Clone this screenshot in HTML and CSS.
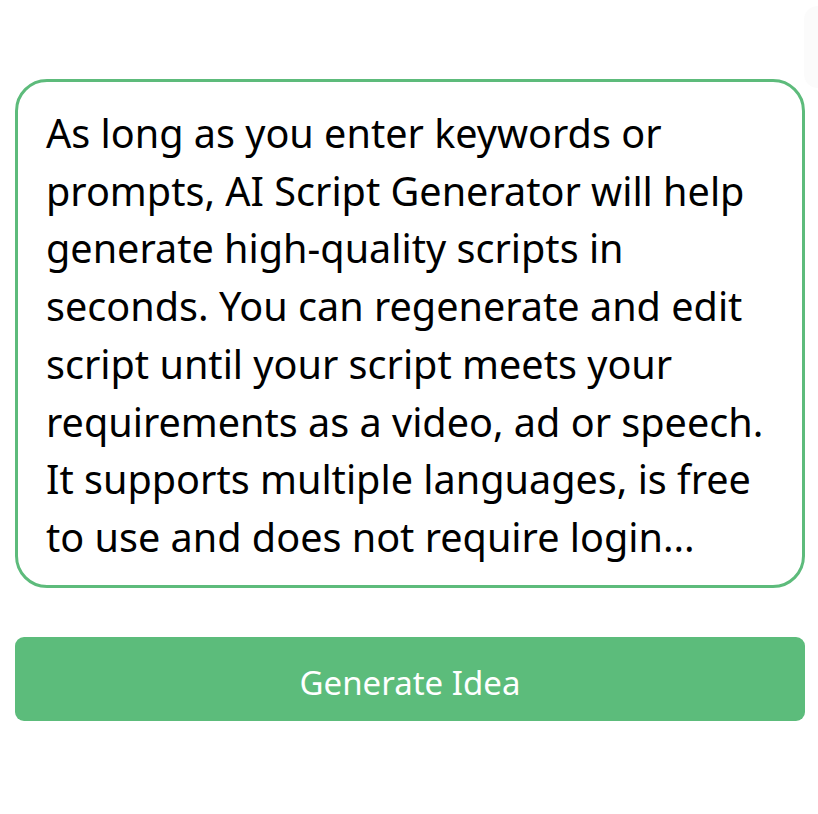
FILE: index.html
```html
<!DOCTYPE html>
<html lang="en">

<head>
    <meta charset="UTF-8">
    <meta name="viewport" content="width=device-width, initial-scale=1.0">
    <title>AI Script Generator</title>
    <link rel="stylesheet" href="styles.css">
</head>

<body>
    <div class="glow"></div>
    <form class="generator">
        <div class="prompt__box">
            As long as you enter keywords or prompts, AI Script Generator will help generate high-quality scripts in seconds. You can regenerate and edit script until your script meets your requirements as a video, ad or speech. It supports multiple languages, is free to use and does not require login...
        </div>
        <button class="btn" type="button">Generate Idea</button>
    </form>
</body>

</html>
```

FILE: styles.css
```css
* {
    box-sizing: border-box;
    padding: 0px;
    margin: 0px;
}

body {
    width: 818px;
    height: 814px;
    overflow: hidden;
    background-color: #ffffff;
    font-family: 'Noto Sans', sans-serif;
    position: relative;
}

/* faint circle peeking in at the top right */
.glow {
    position: absolute;
    top: 6px;
    right: 0;
    width: 14px;
    height: 82px;
    border-radius: 41px 0 0 41px / 41px 0 0 41px;
    background-color: #fbfbfb;
}

.generator {
    display: flex;
    flex-direction: column;
    gap: 49px;
    padding: 79px 13px 0 15px;
}

.prompt__box {
    border: 3px solid #5dbb7b;
    border-radius: 32px;
    padding: 23px 26px 18px 28px;
    font-size: 39.6px;
    line-height: 57.7px;
    color: #000000;
}

.btn {
    height: 84px;
    width: 100%;
    border: none;
    border-radius: 9px;
    background-color: #5cbc7b;
    color: #ffffff;
    font-family: 'Noto Sans', sans-serif;
    font-size: 33px;
    padding-top: 7px;
    cursor: pointer;
    outline: none;
}
```
